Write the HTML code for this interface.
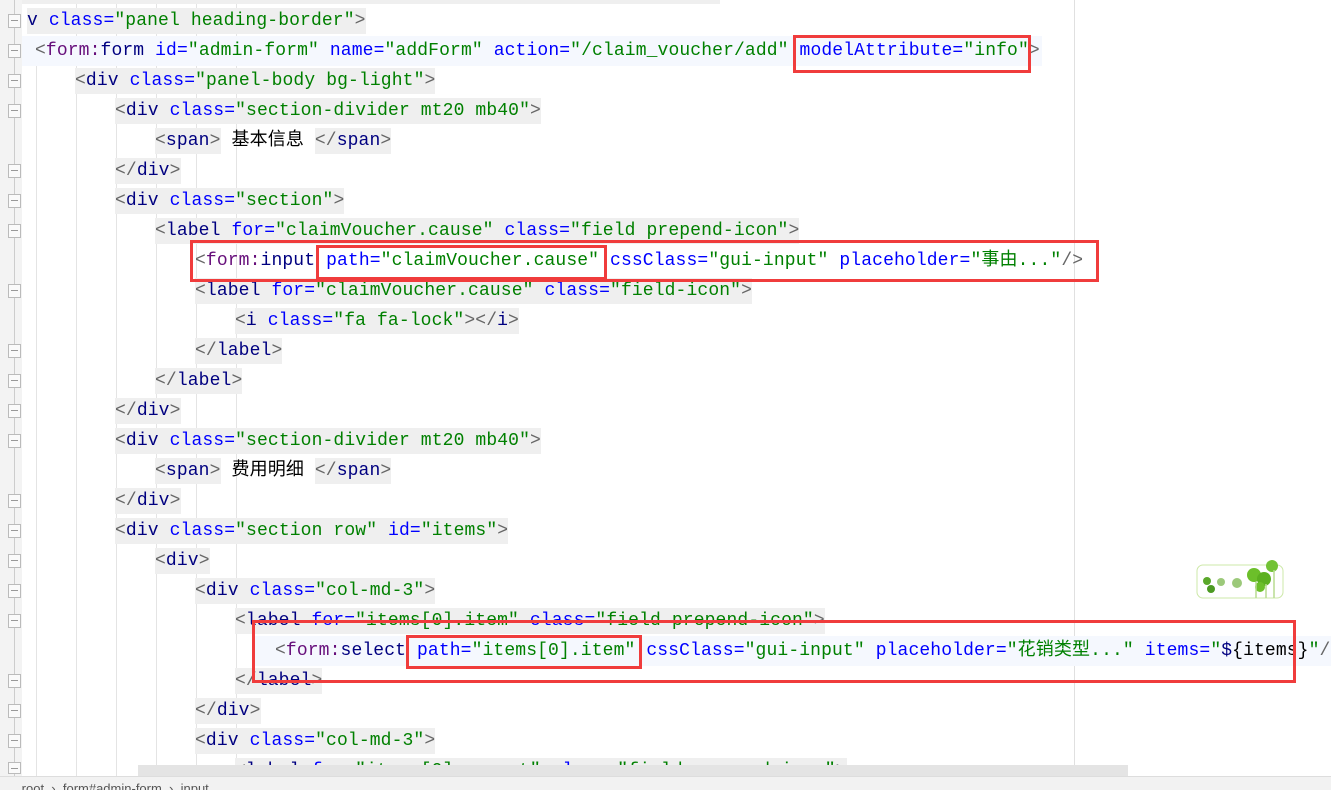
<!DOCTYPE html>
<html><head><meta charset="utf-8"><style>
html,body{margin:0;width:1331px;height:790px;overflow:hidden}
body{background:#fff;position:relative;font-family:"Liberation Mono","Noto Sans CJK SC",monospace;font-size:18px;letter-spacing:0.12px}
.g{position:absolute;left:0;top:0;width:22px;height:790px;background:#f3f3f3}
.ig{position:absolute;top:0;width:1px;height:776px;background:#e4e4e4}
.l{position:absolute;height:30px;line-height:30px;white-space:pre;color:#000}
.l span.b{background:#efefef;padding:3px 0}
.t{color:#000080}.a{color:#0000ff}.v{color:#008000}.p{color:#666}.n{color:#660e7a}
.cur{position:absolute;height:30px;background:#f5f8fe}
.r{position:absolute;border:3px solid #f03c3c;box-sizing:border-box}
.fm{position:absolute;left:8px;width:13px;height:14px;border:1px solid #bbb;background:#fafafa;box-sizing:border-box}
.fm:after{content:"";position:absolute;left:2px;top:5px;width:7px;height:1px;background:#999}
</style></head><body>
<div class="g"></div>
<div style="position:absolute;left:14px;top:0;width:1px;height:776px;background:#ccc"></div>
<div class="ig" style="left:36px;top:66px;height:710px"></div>
<div class="ig" style="left:76px"></div>
<div class="ig" style="left:116px"></div>
<div class="ig" style="left:156px"></div>
<div class="ig" style="left:196px"></div>
<div class="ig" style="left:236px"></div>
<div style="position:absolute;left:1074px;top:0;width:1px;height:776px;background:#e0e0e0"></div>
<div style="position:absolute;left:22px;top:0;width:698px;height:4px;background:#efefef"></div>
<div class="cur" style="left:22px;top:36px;width:1020px"></div>
<div class="cur" style="left:252px;top:636px;width:1079px"></div>

<div class="l" style="left:27px;top:6px"><span class="b"><span class="t">v</span> <span class="a">class=</span><span class="v">"panel heading-border"</span><span class="p">&gt;</span></span></div>
<div class="l" style="left:35px;top:36px"><span class="p">&lt;</span><span class="n">form:</span><span class="t">form</span> <span class="a">id=</span><span class="v">"admin-form"</span> <span class="a">name=</span><span class="v">"addForm"</span> <span class="a">action=</span><span class="v">"/claim_voucher/add"</span> <span class="a">modelAttribute=</span><span class="v">"info"</span><span class="p">&gt;</span></div>
<div class="l" style="left:75px;top:66px"><span class="b"><span class="p">&lt;</span><span class="t">div</span> <span class="a">class=</span><span class="v">"panel-body bg-light"</span><span class="p">&gt;</span></span></div>
<div class="l" style="left:115px;top:96px"><span class="b"><span class="p">&lt;</span><span class="t">div</span> <span class="a">class=</span><span class="v">"section-divider mt20 mb40"</span><span class="p">&gt;</span></span></div>
<div class="l" style="left:155px;top:126px"><span class="b"><span class="p">&lt;</span><span class="t">span</span><span class="p">&gt;</span></span> 基本信息 <span class="b"><span class="p">&lt;/</span><span class="t">span</span><span class="p">&gt;</span></span></div>
<div class="l" style="left:115px;top:156px"><span class="b"><span class="p">&lt;/</span><span class="t">div</span><span class="p">&gt;</span></span></div>
<div class="l" style="left:115px;top:186px"><span class="b"><span class="p">&lt;</span><span class="t">div</span> <span class="a">class=</span><span class="v">"section"</span><span class="p">&gt;</span></span></div>
<div class="l" style="left:155px;top:216px"><span class="b"><span class="p">&lt;</span><span class="t">label</span> <span class="a">for=</span><span class="v">"claimVoucher.cause"</span> <span class="a">class=</span><span class="v">"field prepend-icon"</span><span class="p">&gt;</span></span></div>
<div class="l" style="left:195px;top:246px"><span class="p">&lt;</span><span class="n">form:</span><span class="t">input</span> <span class="a">path=</span><span class="v">"claimVoucher.cause"</span> <span class="a">cssClass=</span><span class="v">"gui-input"</span> <span class="a">placeholder=</span><span class="v">"事由..."</span><span class="p">/&gt;</span></div>
<div class="l" style="left:195px;top:276px"><span class="b"><span class="p">&lt;</span><span class="t">label</span> <span class="a">for=</span><span class="v">"claimVoucher.cause"</span> <span class="a">class=</span><span class="v">"field-icon"</span><span class="p">&gt;</span></span></div>
<div class="l" style="left:235px;top:306px"><span class="b"><span class="p">&lt;</span><span class="t">i</span> <span class="a">class=</span><span class="v">"fa fa-lock"</span><span class="p">&gt;&lt;/</span><span class="t">i</span><span class="p">&gt;</span></span></div>
<div class="l" style="left:195px;top:336px"><span class="b"><span class="p">&lt;/</span><span class="t">label</span><span class="p">&gt;</span></span></div>
<div class="l" style="left:155px;top:366px"><span class="b"><span class="p">&lt;/</span><span class="t">label</span><span class="p">&gt;</span></span></div>
<div class="l" style="left:115px;top:396px"><span class="b"><span class="p">&lt;/</span><span class="t">div</span><span class="p">&gt;</span></span></div>
<div class="l" style="left:115px;top:426px"><span class="b"><span class="p">&lt;</span><span class="t">div</span> <span class="a">class=</span><span class="v">"section-divider mt20 mb40"</span><span class="p">&gt;</span></span></div>
<div class="l" style="left:155px;top:456px"><span class="b"><span class="p">&lt;</span><span class="t">span</span><span class="p">&gt;</span></span> 费用明细 <span class="b"><span class="p">&lt;/</span><span class="t">span</span><span class="p">&gt;</span></span></div>
<div class="l" style="left:115px;top:486px"><span class="b"><span class="p">&lt;/</span><span class="t">div</span><span class="p">&gt;</span></span></div>
<div class="l" style="left:115px;top:516px"><span class="b"><span class="p">&lt;</span><span class="t">div</span> <span class="a">class=</span><span class="v">"section row"</span> <span class="a">id=</span><span class="v">"items"</span><span class="p">&gt;</span></span></div>
<div class="l" style="left:155px;top:546px"><span class="b"><span class="p">&lt;</span><span class="t">div</span><span class="p">&gt;</span></span></div>
<div class="l" style="left:195px;top:576px"><span class="b"><span class="p">&lt;</span><span class="t">div</span> <span class="a">class=</span><span class="v">"col-md-3"</span><span class="p">&gt;</span></span></div>
<div class="l" style="left:235px;top:606px"><span class="b"><span class="p">&lt;</span><span class="t">label</span> <span class="a">for=</span><span class="v">"items[0].item"</span> <span class="a">class=</span><span class="v">"field prepend-icon"</span><span class="p">&gt;</span></span></div>
<div class="l" style="left:275px;top:636px"><span class="p">&lt;</span><span class="n">form:</span><span class="t">select</span> <span class="a">path=</span><span class="v">"items[0].item"</span> <span class="a">cssClass=</span><span class="v">"gui-input"</span> <span class="a">placeholder=</span><span class="v">"花销类型..."</span> <span class="a">items=</span><span class="v">"</span><span class="t">$</span>{items}<span class="v">"</span><span class="p">/&gt;</span></div>
<div class="l" style="left:235px;top:666px"><span class="b"><span class="p">&lt;/</span><span class="t">label</span><span class="p">&gt;</span></span></div>
<div class="l" style="left:195px;top:696px"><span class="b"><span class="p">&lt;/</span><span class="t">div</span><span class="p">&gt;</span></span></div>
<div class="l" style="left:195px;top:726px"><span class="b"><span class="p">&lt;</span><span class="t">div</span> <span class="a">class=</span><span class="v">"col-md-3"</span><span class="p">&gt;</span></span></div>
<div class="l" style="left:235px;top:756px;height:20px;overflow:hidden"><span class="b"><span class="p">&lt;</span><span class="t">label</span> <span class="a">for=</span><span class="v">"items[0].amount"</span> <span class="a">class=</span><span class="v">"field prepend-icon"</span><span class="p">&gt;</span></span></div>

<div class="fm" style="top:14px"></div><div class="fm" style="top:44px"></div><div class="fm" style="top:74px"></div><div class="fm" style="top:104px"></div>
<div class="fm" style="top:164px"></div><div class="fm" style="top:194px"></div><div class="fm" style="top:224px"></div><div class="fm" style="top:284px"></div>
<div class="fm" style="top:344px"></div><div class="fm" style="top:374px"></div><div class="fm" style="top:404px"></div><div class="fm" style="top:434px"></div>
<div class="fm" style="top:494px"></div><div class="fm" style="top:524px"></div><div class="fm" style="top:554px"></div><div class="fm" style="top:584px"></div>
<div class="fm" style="top:614px"></div><div class="fm" style="top:674px"></div><div class="fm" style="top:704px"></div><div class="fm" style="top:734px"></div><div class="fm" style="top:762px;height:12px"></div>

<div class="r" style="left:793px;top:35px;width:238px;height:38px"></div>
<div class="r" style="left:190px;top:240px;width:909px;height:42px"></div>
<div class="r" style="left:316px;top:245px;width:291px;height:35px"></div>
<div class="r" style="left:252px;top:620px;width:1044px;height:63px"></div>
<div class="r" style="left:406px;top:635px;width:236px;height:34px"></div>

<svg style="position:absolute;left:1194px;top:552px" width="92" height="48">
<rect x="3" y="13" width="86" height="33" rx="6" fill="#fff" stroke="#cde8a8"/>
<circle cx="13" cy="29" r="4" fill="#5aa82a"/><circle cx="17" cy="37" r="4" fill="#4c9a22"/>
<circle cx="27" cy="30" r="4" fill="#9cc97a"/><circle cx="43" cy="31" r="5" fill="#9cc97a"/>
<circle cx="60" cy="23" r="7" fill="#6cbf2a"/><circle cx="70" cy="27" r="7" fill="#5cb020"/><circle cx="78" cy="14" r="6" fill="#72c234"/><circle cx="66" cy="35" r="5" fill="#6cbf2a"/>
<path d="M62 30 V46 M72 32 V46 M80 18 V46" stroke="#b8dc90" stroke-width="1.5"/>
</svg>

<div style="position:absolute;left:138px;top:765px;width:990px;height:11px;background:#e4e4e4"></div>
<div style="position:absolute;left:0;top:776px;width:1331px;height:14px;box-sizing:border-box;background:#f2f2f2;border-top:1px solid #ddd;font-family:'Liberation Sans',sans-serif;font-size:13px;color:#555;line-height:24px;white-space:pre;overflow:hidden;letter-spacing:0">      root  ›  form#admin-form  ›  input</div>
</body></html>
